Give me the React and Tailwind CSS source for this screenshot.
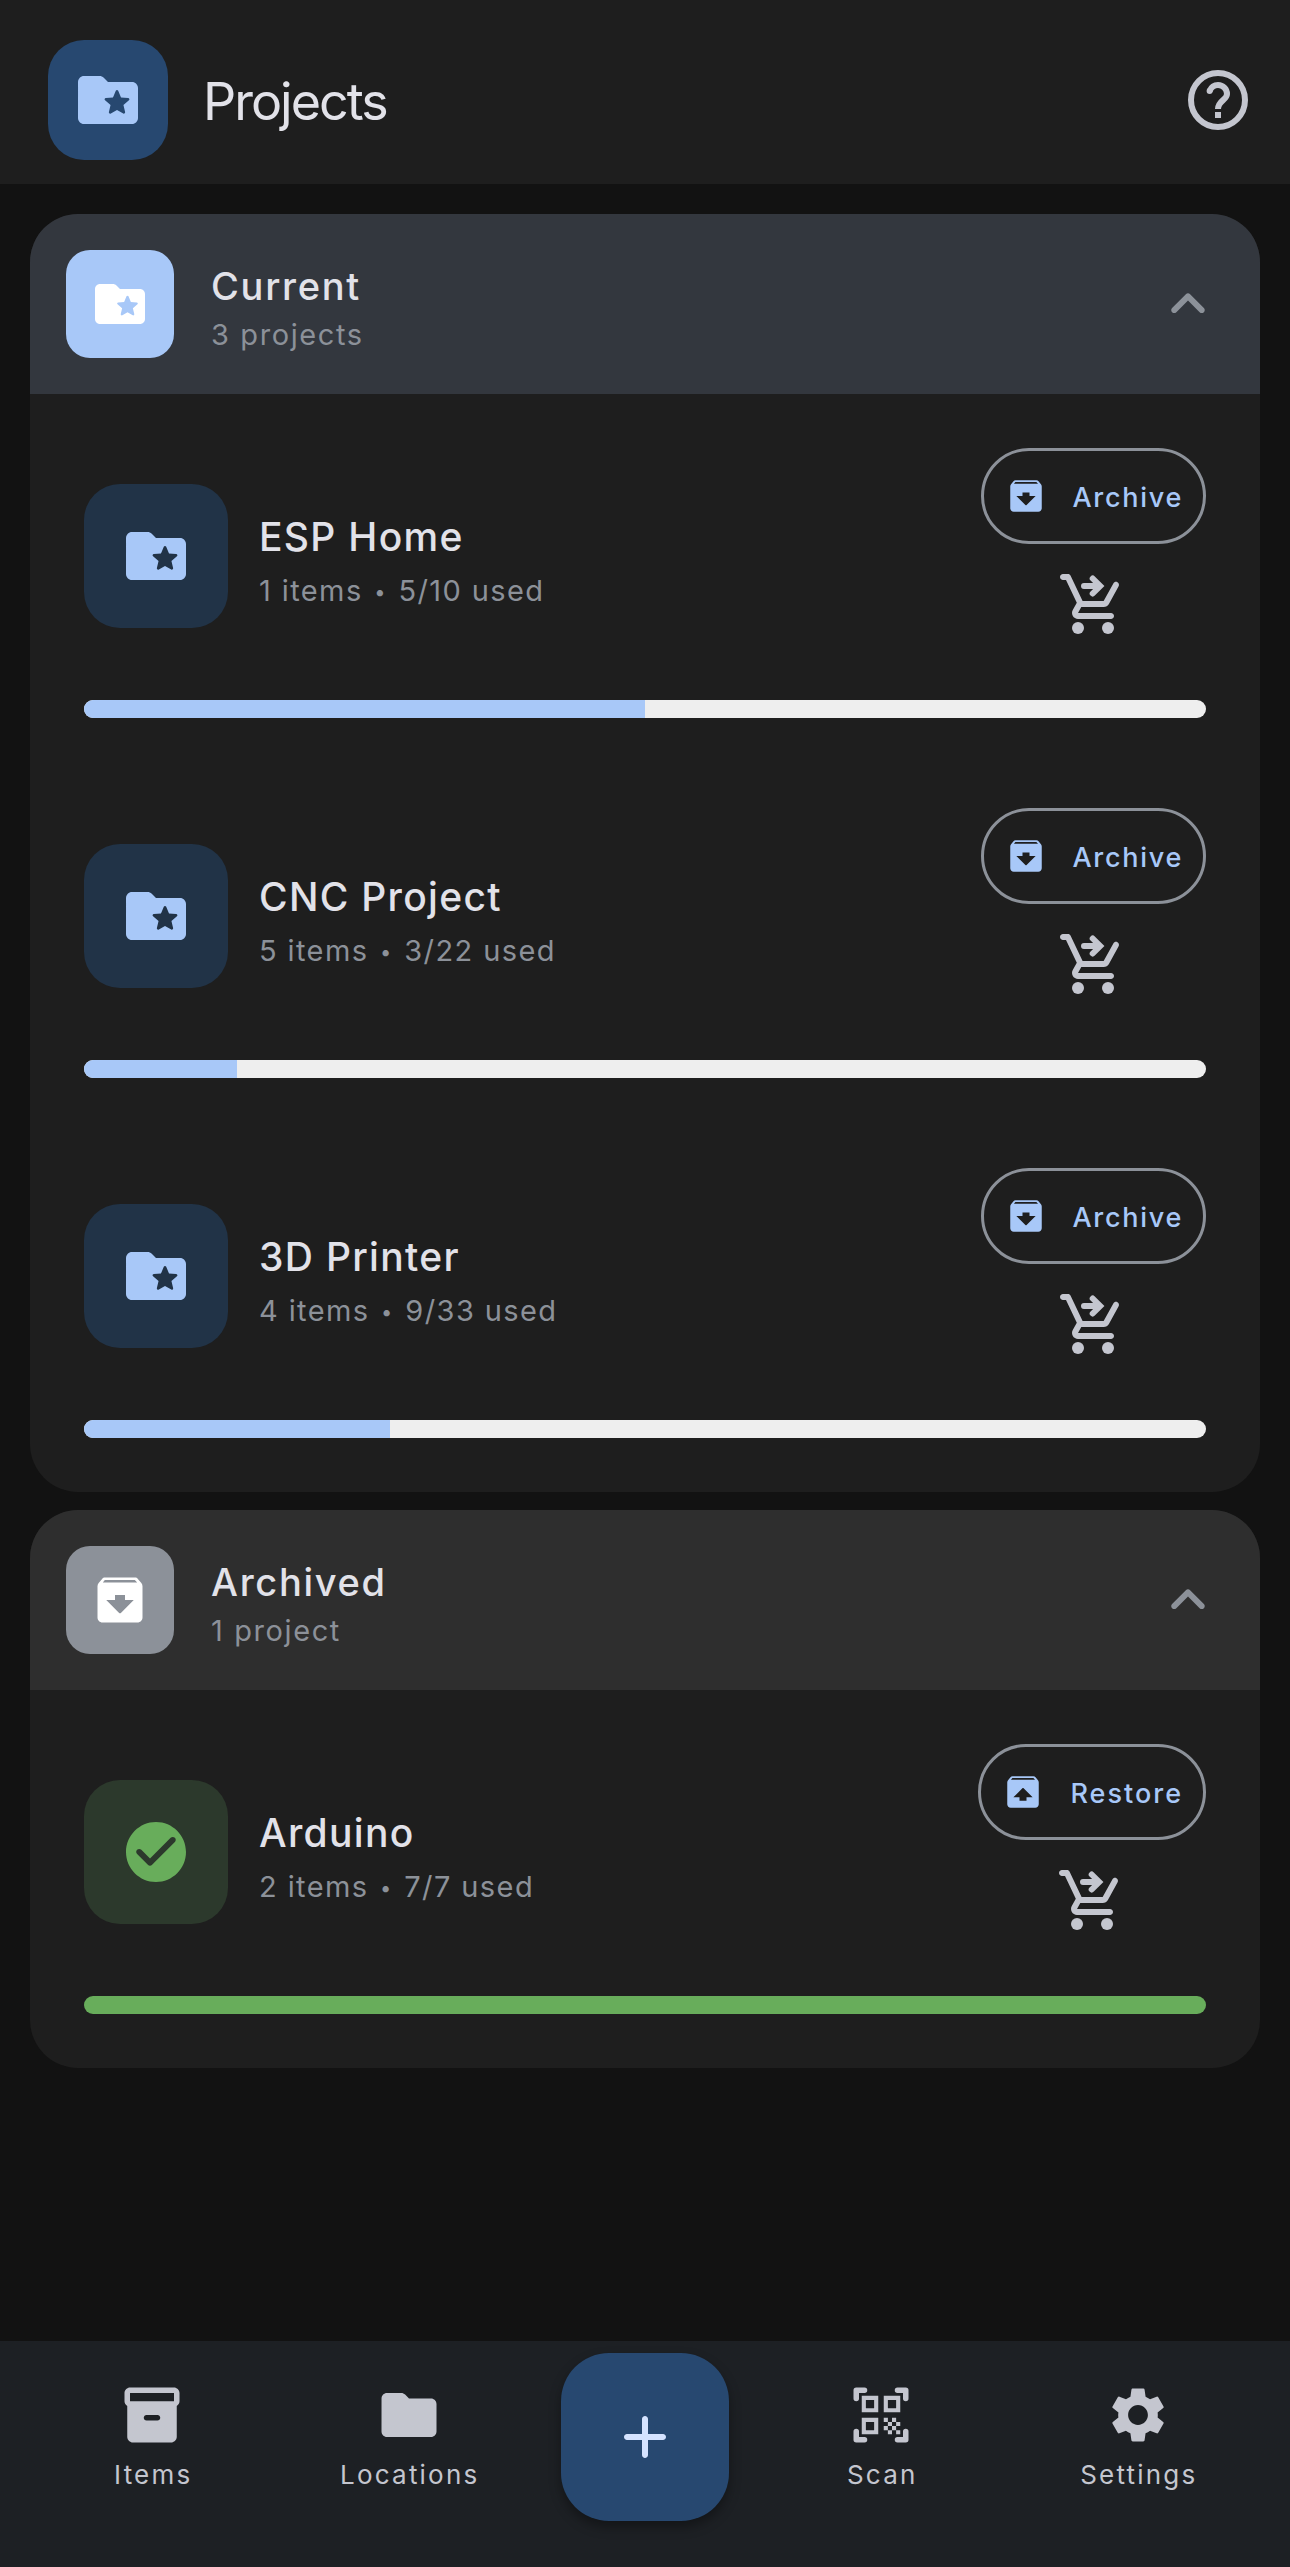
import React, { useState } from 'react';
import { MdSettings } from 'react-icons/md';

const currentProjects = [
  { id: 1, name: 'ESP Home', items: 1, used: 5, total: 10 },
  { id: 2, name: 'CNC Project', items: 5, used: 3, total: 22 },
  { id: 3, name: '3D Printer', items: 4, used: 9, total: 33 },
];

const archivedProjects = [
  { id: 4, name: 'Arduino', items: 2, used: 7, total: 7 },
];

function Icon({ className, children }) {
  return (
    <svg viewBox="0 0 24 24" fill="currentColor" className={`shrink-0 ${className}`}>
      {children}
    </svg>
  );
}

function FolderStarIcon({ className }) {
  return (
    <Icon className={className}>
      <path d="M20 6h-8l-1.41-1.41C10.21 4.21 9.7 4 9.17 4H4c-1.1 0-1.99.9-1.99 2L2 18c0 1.1.9 2 2 2h16c1.1 0 2-.9 2-2V8c0-1.1-.9-2-2-2zM17.1 16.49L15 15.31l-2.05 1.2c-.33.19-.74-.1-.65-.48l.55-2.34-1.83-1.57c-.29-.25-.14-.73.25-.77l2.39-.2.94-2.21c.15-.36.65-.36.8 0l.94 2.21 2.39.2c.38.04.54.52.25.77l-1.83 1.57.55 2.34c.09.37-.32.66-.6.46z" />
    </Icon>
  );
}

function FolderIcon({ className }) {
  return (
    <Icon className={className}>
      <path d="M10.59 4.59C10.21 4.21 9.7 4 9.17 4H4c-1.1 0-1.99.9-1.99 2L2 18c0 1.1.9 2 2 2h16c1.1 0 2-.9 2-2V8c0-1.1-.9-2-2-2h-8l-1.41-1.41z" />
    </Icon>
  );
}

function ArchiveIcon({ className }) {
  return (
    <Icon className={className}>
      <path d="M20.54 5.23l-1.39-1.68C18.88 3.21 18.47 3 18 3H6c-.47 0-.88.21-1.16.55L3.46 5.23C3.17 5.57 3 6.02 3 6.5V19c0 1.1.9 2 2 2h14c1.1 0 2-.9 2-2V6.5c0-.48-.17-.93-.46-1.27zm-8.89 11.92L6.5 12H10v-2h4v2h3.5l-5.15 5.15c-.19.19-.51.19-.7 0zM5.12 5l.81-1h12l.94 1H5.12z" />
    </Icon>
  );
}

function RestoreIcon({ className }) {
  return (
    <Icon className={className}>
      <path d="M20.55 5.22l-1.39-1.68C18.88 3.21 18.47 3 18 3H6c-.47 0-.88.21-1.15.55L3.46 5.22C3.17 5.57 3 6.01 3 6.5V19c0 1.1.89 2 2 2h14c1.1 0 2-.9 2-2V6.5c0-.49-.17-.93-.45-1.28zm-8.2 4.63L17.5 15H14v2h-4v-2H6.5l5.15-5.15c.19-.19.51-.19.7 0zM5.12 5l.82-1h12l.93 1H5.12z" />
    </Icon>
  );
}

function CheckIcon({ className }) {
  return (
    <Icon className={className}>
      <path d="M12 2C6.48 2 2 6.48 2 12s4.48 10 10 10 10-4.48 10-10S17.52 2 12 2zM9.29 16.29L5.7 12.7c-.39-.39-.39-1.02 0-1.41.39-.39 1.02-.39 1.41 0L10 14.17l6.88-6.88c.39-.39 1.02-.39 1.41 0 .39.39.39 1.02 0 1.41l-7.59 7.59c-.38.39-1.02.39-1.41 0z" />
    </Icon>
  );
}

function CartIcon({ className }) {
  return (
    <Icon className={className}>
      <path d="M1 3c0 .55.45 1 1 1h1l3.6 7.59-1.35 2.44C4.52 15.37 5.48 17 7 17h11c.55 0 1-.45 1-1s-.45-1-1-1H7l1.1-2h7.45c.75 0 1.41-.41 1.75-1.03l3.24-5.86c.27-.48.09-1.09-.39-1.36-.49-.27-1.1-.09-1.37.39L15.55 11H8.53L4.54 2.57c-.16-.35-.52-.57-.9-.57H2c-.55 0-1 .45-1 1z" />
      <circle cx="7" cy="20" r="2" />
      <circle cx="17" cy="20" r="2" />
      <path d="M9 6h4.5M11.9 3.5L14.4 6l-2.5 2.5" fill="none" stroke="currentColor" strokeWidth="2" strokeLinecap="round" />
    </Icon>
  );
}

function HelpIcon({ className }) {
  return (
    <Icon className={className}>
      <circle cx="12" cy="12" r="9" fill="none" stroke="currentColor" strokeWidth="2" />
      <path d="M9.2 9C9.7 7.8 10.7 7 12 7c1.66 0 3 1.34 3 3 0 2-3 2.2-3 5" fill="none" stroke="currentColor" strokeWidth="2" />
      <circle cx="9.2" cy="9" r="1" />
      <path d="M11 16h2v2h-2z" />
    </Icon>
  );
}

function ChevronIcon({ className }) {
  return (
    <Icon className={className}>
      <path d="M11.29 8.71L6.7 13.3c-.39.39-.39 1.02 0 1.41.39.39 1.02.39 1.41 0L12 10.83l3.88 3.88c.39.39 1.02.39 1.41 0 .39-.39.39-1.02 0-1.41L12.7 8.71c-.38-.39-1.02-.39-1.41 0z" />
    </Icon>
  );
}

function BoxIcon({ className }) {
  return (
    <Icon className={className}>
      <path d="M20 2H4c-1 0-2 .9-2 2v3.01c0 .72.43 1.34 1 1.69V20c0 1.1 1.1 2 2 2h14c.9 0 2-.9 2-2V8.7c.57-.35 1-.97 1-1.69V4c0-1.1-1-2-2-2zm-6 12h-4c-.55 0-1-.45-1-1s.45-1 1-1h4c.55 0 1 .45 1 1s-.45 1-1 1zm6-7H4V4h16v3z" />
    </Icon>
  );
}

function ScanIcon({ className }) {
  return (
    <Icon className={className}>
      <path d="M9.5 6.5v3h-3v-3h3M11 5H5v6h6V5zm-1.5 9.5v3h-3v-3h3M11 13H5v6h6v-6zm6.5-6.5v3h-3v-3h3M19 5h-6v6h6V5zm-6 8h1.5v1.5H13V13zm1.5 1.5H16V16h-1.5v-1.5zM16 13h1.5v1.5H16V13zm-3 3h1.5v1.5H13V16zm1.5 1.5H16V19h-1.5v-1.5zM16 16h1.5v1.5H16V16zm1.5-1.5H19V16h-1.5v-1.5zm0 3H19V19h-1.5v-1.5z" />
      <path d="M3 6V3h3M18 3h3v3M21 18v3h-3M6 21H3v-3" fill="none" stroke="currentColor" strokeWidth="2" strokeLinecap="round" strokeLinejoin="round" />
    </Icon>
  );
}

function PlusIcon({ className }) {
  return (
    <Icon className={className}>
      <path d="M18 13h-5v5c0 .55-.45 1-1 1s-1-.45-1-1v-5H6c-.55 0-1-.45-1-1s.45-1 1-1h5V6c0-.55.45-1 1-1s1 .45 1 1v5h5c.55 0 1 .45 1 1s-.45 1-1 1z" />
    </Icon>
  );
}

function ProjectRow({ project, archived }) {
  const percent = (project.used / project.total) * 100;

  return (
    <div>
      <div className="flex items-center">
        {archived ? (
          <div className="flex size-36 items-center justify-center rounded-[36px] bg-[#2c392c]">
            <CheckIcon className="size-18 text-[#68ad5b]" />
          </div>
        ) : (
          <div className="flex size-36 items-center justify-center rounded-[36px] bg-[#213347]">
            <FolderStarIcon className="size-18 text-[#a8c8f8]" />
          </div>
        )}

        <div className="ml-[31px] flex-1 pt-4">
          <h3 className="text-[39px] leading-[54px] font-medium tracking-[1.3px] text-[#e2e2e9]">{project.name}</h3>
          <p className="text-[29px] leading-[54px] tracking-[1.4px] text-[#8c9199]">
            {project.items} items <span className="mx-[2px] align-[2px] text-[20px] leading-none">•</span> {project.used}/{project.total} used
          </p>
        </div>

        <div className="flex flex-col items-center">
          <button className="flex h-24 items-center rounded-full border-3 border-[#8c9199] pr-[20px] pl-[21px] text-[#a8c8f8]">
            {archived ? <RestoreIcon className="size-[42px]" /> : <ArchiveIcon className="size-[42px]" />}
            <span
              className={
                archived
                  ? 'ml-[26px] pt-1 text-[27px] font-medium tracking-[2px]'
                  : 'ml-[26px] pt-1 text-[27px] font-medium tracking-[1.7px]'
              }
            >
              {archived ? 'Restore' : 'Archive'}
            </span>
          </button>
          <button className="flex size-30 items-center justify-center text-[#c4c6cf]">
            <CartIcon className="size-18" />
          </button>
        </div>
      </div>

      <div className="mt-9 h-[18px] overflow-hidden rounded-full bg-[#eeeeee]">
        <div
          className={archived ? 'h-full bg-[#68ad5b]' : 'h-full bg-[#a8c8f8]'}
          style={{ width: `${percent}%` }}
        ></div>
      </div>
    </div>
  );
}

function Section({ title, projects, archived }) {
  const [open, setOpen] = useState(true);

  return (
    <section className="overflow-hidden rounded-[48px] bg-[#1e1e1e]">
      <div
        onClick={() => setOpen(!open)}
        className={archived ? 'flex h-45 items-center bg-[#2e2e2e] px-9' : 'flex h-45 items-center bg-[#33373e] px-9'}
      >
        {archived ? (
          <div className="flex size-27 items-center justify-center rounded-3xl bg-[#8c9199]">
            <ArchiveIcon className="size-15 text-white" />
          </div>
        ) : (
          <div className="flex size-27 items-center justify-center rounded-3xl bg-[#a8c8f8]">
            <FolderStarIcon className="size-15 text-white" />
          </div>
        )}
        <div className="ml-[37px] flex-1 pt-3">
          <h2 className="text-[38px] leading-[49px] font-medium tracking-[1.7px] text-[#e2e2e9]">{title}</h2>
          <p className="text-[29px] leading-[48px] tracking-[1.6px] text-[#8c9199]">
            {projects.length} {projects.length === 1 ? 'project' : 'projects'}
          </p>
        </div>
        <ChevronIcon className={open ? 'size-18 text-[#8c9199]' : 'size-18 rotate-180 text-[#8c9199]'} />
      </div>

      {open && (
        <div className="flex flex-col gap-[90px] p-[54px]">
          {projects.map((project) => (
            <ProjectRow key={project.id} project={project} archived={archived} />
          ))}
        </div>
      )}
    </section>
  );
}

function NavItem({ label, icon }) {
  return (
    <button className="flex w-[256.5px] flex-col items-center pt-[41px] text-[#c4c6cf]">
      {icon}
      <span className="mt-[9px] pl-[2px] text-[26px] leading-[36px] tracking-[2.2px]">{label}</span>
    </button>
  );
}

export default function App() {
  return (
    <div className="flex h-[2567px] w-full flex-col bg-[#121212] font-[Inter,'Liberation_Sans',sans-serif]">
      <header className="flex h-46 items-start bg-[#1e1e1e] px-12 pt-10">
        <div className="flex size-30 items-center justify-center rounded-[36px] bg-[#274870]">
          <FolderStarIcon className="size-18 text-[#a8c8f8]" />
        </div>
        <h1 className="ml-[35px] flex-1 text-[52px] leading-[124px] tracking-[-2px] text-[#e2e2e9]">Projects</h1>
        <button className="-mr-3 flex h-30 items-center text-[#c4c6cf]">
          <HelpIcon className="size-18" />
        </button>
      </header>

      <main className="flex flex-1 flex-col gap-[18px] px-[30px] pt-[30px]">
        <Section title="Current" projects={currentProjects} />
        <Section title="Archived" projects={archivedProjects} archived />
      </main>

      <nav className="flex h-[226px] items-start justify-center bg-[#1d2024]">
        <NavItem label="Items" icon={<BoxIcon className="size-[66px]" />} />
        <NavItem label="Locations" icon={<FolderIcon className="size-[66px]" />} />
        <button className="mx-6 mt-3 flex size-42 items-center justify-center rounded-[48px] bg-[#274870] text-[#d5e3ff] shadow-[0_6px_12px_rgba(0,0,0,0.35)]">
          <PlusIcon className="size-18" />
        </button>
        <NavItem label="Scan" icon={<ScanIcon className="size-[66px]" />} />
        <NavItem label="Settings" icon={<MdSettings className="size-[66px]" />} />
      </nav>
    </div>
  );
}
